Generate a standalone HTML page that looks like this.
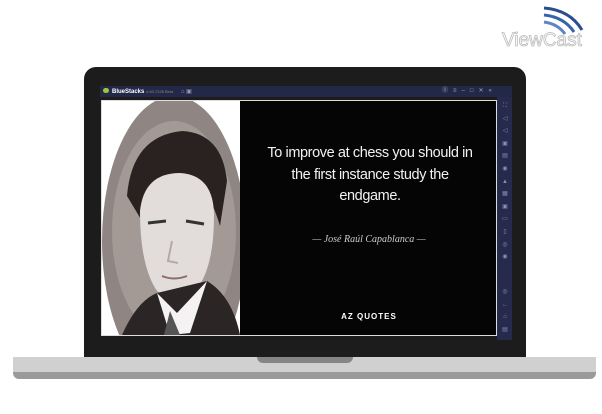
<!DOCTYPE html>
<html><head><style>
body{margin:0;width:602px;height:414px;background:#fff;position:relative;overflow:hidden;font-family:"Liberation Sans",sans-serif}
div{position:absolute;box-sizing:border-box}
</style></head><body>
<svg style="position:absolute;left:500px;top:4px" width="100" height="45">
<path d="M44 4 Q70 6 82 26" stroke="#2a4d8f" stroke-width="3" fill="none"/>
<path d="M44 11 Q64 13 74 28" stroke="#3a62a8" stroke-width="3" fill="none"/>
<path d="M44 18 Q58 20 65 30" stroke="#5f85c2" stroke-width="3" fill="none"/>
<text x="2" y="42" font-family="Liberation Sans" font-size="19" fill="#fff" stroke="#bbb" stroke-width="0.8">ViewCast</text>
</svg>
<div style="left:84px;top:67px;width:442px;height:292px;background:#1c1c1c;border-radius:12px 12px 0 0"></div>
<div style="left:100px;top:86px;width:412px;height:11px;background:#232849"></div>
<div style="left:103px;top:88px;width:6px;height:5px;background:#9fc43a;border-radius:3px"></div>
<div style="left:112px;top:86px;font-size:6px;line-height:11px;color:#fff;font-weight:bold">BlueStacks <span style="color:#888;font-weight:normal;font-size:4px">4.60.7228 Beta</span> <span style="color:#99a;font-weight:normal;margin-left:6px">⌂ ▣</span></div>
<div style="left:442px;top:86px;font-size:6px;line-height:11px;color:#9aa;letter-spacing:5px">⓪≡–□✕«</div>
<div style="left:497px;top:97px;width:15px;height:243px;background:#262b4d"></div>
<div style="left:500px;top:100px;width:10px;font-size:6px;line-height:12.6px;color:#8890b8;text-align:center">⛶<br>◁<br>◁<br>▣<br>▤<br>◉<br>▲<br>▦<br>▣<br>▭<br>▯<br>◎<br>◉</div>
<div style="left:500px;top:286px;width:10px;font-size:6px;line-height:12.6px;color:#8890b8;text-align:center">◎<br>←<br>⌂<br>▤</div>
<div style="left:101px;top:100px;width:396px;height:236px;background:#ddd"></div>
<div style="left:102px;top:101px;width:138px;height:234px;background:#fff;overflow:hidden">
<svg width="138" height="234">
<ellipse cx="72" cy="140" rx="72" ry="145" fill="#8f8582"/>
<ellipse cx="72" cy="130" rx="62" ry="110" fill="#a39995"/>
<path d="M25 95 Q30 35 80 30 Q120 32 125 80 L118 125 Q105 80 80 75 Q45 78 40 120 Z" fill="#2a2220"/>
<path d="M38 110 Q42 72 78 72 Q112 74 112 115 Q112 165 95 188 Q75 205 55 190 Q38 165 38 110Z" fill="#e2dcda"/>
<path d="M46 122 L64 120 M84 120 L102 123" stroke="#333" stroke-width="3"/>
<path d="M70 140 L66 160 L76 162" stroke="#b5aaa7" stroke-width="2" fill="none"/>
<path d="M60 175 Q72 180 85 175" stroke="#8a6e6a" stroke-width="2" fill="none"/>
<path d="M20 234 Q35 200 55 192 L105 180 Q130 195 138 234 Z" fill="#2b2525"/>
<path d="M55 192 L75 212 L105 180 L88 232 L68 234 Z" fill="#f4f2f2"/>
<path d="M68 210 L78 234 L62 234 Z" fill="#555"/>
</svg></div>
<div style="left:240px;top:101px;width:256px;height:234px;background:#050505"></div>
<div style="left:240px;top:143px;width:260px;text-align:center;color:#f2f2f2;font-size:14.5px;line-height:21.5px;letter-spacing:-0.4px;white-space:nowrap">To improve at chess you should in<br>the first instance study the<br>endgame.</div>
<div style="left:250px;top:234px;width:238px;text-align:center;color:#ccc;font-size:10px;font-style:italic;font-family:'Liberation Serif',serif">— José Raúl Capablanca —</div>
<div style="left:250px;top:312px;width:238px;text-align:center;color:#fff;font-size:8px;font-weight:bold;letter-spacing:1px">AZ QUOTES</div>
<div style="left:13px;top:357px;width:583px;height:22px;background:#d0d0d0;border-radius:0 0 6px 6px;border-bottom:7px solid #9a9a9a"></div>
<div style="left:257px;top:357px;width:96px;height:6px;background:#858585;border-radius:0 0 8px 8px"></div>
</body></html>
